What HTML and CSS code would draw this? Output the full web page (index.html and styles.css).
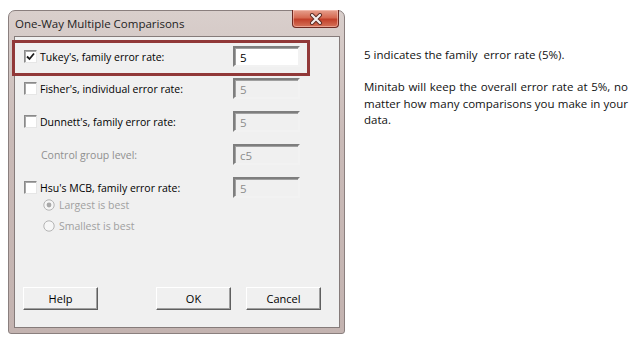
FILE: index.html
```html
<!DOCTYPE html>
<html lang="en">
<head>
  <meta charset="UTF-8" />
  <title>One-Way Multiple Comparisons</title>
  <link rel="stylesheet" href="styles.css">
</head>
<body>

  <div class="page">

    <!-- ===== DIALOG ===== -->
    <div class="dialog">
      <div class="titlebar">
        <span class="title">One-Way Multiple Comparisons</span>
        <button class="close" aria-label="Close">
          <svg width="14" height="12" viewBox="0 0 14 12">
            <path d="M3 2 L11 10 M11 2 L3 10" stroke="#5a2a22" stroke-width="4" stroke-linecap="round"/>
            <path d="M3 2 L11 10 M11 2 L3 10" stroke="#f4eeee" stroke-width="2.2" stroke-linecap="round"/>
          </svg>
        </button>
      </div>

      <div class="client">
        <div class="row highlight">
          <label class="opt"><span class="box"><svg width="9" height="9" viewBox="0 0 9 9"><path d="M1 4.5 L3.5 7 L8 1.5" fill="none" stroke="#1a1a1a" stroke-width="1.8"/></svg></span>Tukey's, family error rate:</label>
          <input class="field" type="text" value="5">
        </div>

        <div class="row first">
          <label class="opt"><span class="box"></span>Fisher's, individual error rate:</label>
          <input class="field" type="text" value="5" disabled>
        </div>

        <div class="row">
          <label class="opt"><span class="box"></span>Dunnett's, family error rate:</label>
          <input class="field" type="text" value="5" disabled>
        </div>

        <div class="row">
          <span class="sublabel">Control group level:</span>
          <input class="field" type="text" value="c5" disabled>
        </div>

        <div class="row">
          <label class="opt"><span class="box"></span>Hsu's MCB, family error rate:</label>
          <input class="field" type="text" value="5" disabled>
        </div>

        <div class="radios">
          <label class="radio">
            <svg width="12" height="12" viewBox="0 0 12 12"><circle cx="6" cy="6" r="5.2" fill="#f6f6f6" stroke="#b4b4b4"/><circle cx="6" cy="6" r="2.4" fill="#a9a9a9"/></svg>
            Largest is best
          </label>
          <label class="radio">
            <svg width="12" height="12" viewBox="0 0 12 12"><circle cx="6" cy="6" r="5.2" fill="#f6f6f6" stroke="#b4b4b4"/></svg>
            Smallest is best
          </label>
        </div>

        <div class="buttons">
          <button class="btn">Help</button>
          <span class="spacer"></span>
          <button class="btn">OK</button>
          <button class="btn">Cancel</button>
        </div>
      </div>
    </div>

    <!-- ===== NOTES ===== -->
    <div class="info">
      <p>5 indicates the family &nbsp;error rate (5%).</p>
      <p>Minitab will keep the overall error rate at 5%, no matter how many comparisons you make in your data.</p>
    </div>

  </div>

</body>
</html>
```

FILE: styles.css
```css
* {
  box-sizing: border-box;
  margin: 0;
  padding: 0;
}

body {
  background-color: #ffffff;
  font-family: "Open Sans", "Noto Sans", sans-serif;
}

.page {
  display: flex;
  align-items: flex-start;
  padding: 10px 0 0 8px;
}

/* ===== DIALOG FRAME ===== */
.dialog {
  width: 337px;
  height: 324px;
  display: flex;
  flex-direction: column;
  padding: 0 4px 5px 5px;
  background: linear-gradient(to bottom, #d9cfcc 0%, #c9bab7 40%, #c3b3b0 100%);
  border: 1px solid #8a7f7e;
  border-radius: 7px 7px 3px 3px;
}

.titlebar {
  height: 25px;
  display: flex;
  justify-content: space-between;
  align-items: flex-start;
}

.title {
  font-size: 11.5px;
  color: #1e1e1e;
  padding: 5px 0 0 1px;
}

.close {
  width: 47px;
  height: 18px;
  margin-top: -1px;
  margin-right: 1px;
  display: flex;
  align-items: center;
  justify-content: center;
  border: 1px solid #6e2a22;
  border-top: none;
  border-radius: 0 0 4px 4px;
  background: linear-gradient(to bottom, #e6a08e 0%, #d66a52 45%, #c1402a 55%, #d5735a 100%);
  box-shadow: inset 0 0 0 1px rgba(255, 210, 200, 0.5);
}

/* ===== CLIENT AREA ===== */
.client {
  flex: 1;
  display: flex;
  flex-direction: column;
  padding-top: 3px;
  background-color: #f0f0f0;
  border: 1px solid #857b7a;
  font-size: 10.5px;
  color: #000;
}

.row {
  height: 21px;
  margin-top: 12px;
  display: grid;
  grid-template-columns: 209px 67px;
  align-items: center;
  padding-left: 9px;
}

.row.first {
  margin-top: 2px;
}

.row.highlight {
  width: 298px;
  height: 36px;
  margin: 0 0 0 -3px;
  padding: 0 7px 3px 9px;
  border: 3px solid #913838;
}

.opt {
  display: flex;
  align-items: center;
  gap: 3px;
}

.box {
  width: 13px;
  height: 13px;
  display: flex;
  align-items: center;
  justify-content: center;
  background-color: #ffffff;
  border: 1px solid;
  border-color: #8a8a8a #e6e6e6 #e6e6e6 #8a8a8a;
  box-shadow: inset 1px 1px 0 #a8a8a8;
}

.sublabel {
  color: #8f8f8f;
  padding-left: 17px;
}

.field {
  width: 67px;
  height: 21px;
  padding: 1px 0 0 5px;
  font-family: inherit;
  font-size: 11.5px;
  color: #000;
  background-color: #ffffff;
  border: 2px solid;
  border-color: #7e7e7e #f2f2f2 #f2f2f2 #7e7e7e;
  box-shadow: inset 1px 1px 0 #a0a0a0;
  outline: none;
}

.field:disabled {
  color: #8c8c8c;
  -webkit-text-fill-color: #8c8c8c;
  background-color: #f0f0f0;
}

.radios {
  display: flex;
  flex-direction: column;
  margin-top: -4px;
  padding-left: 28px;
}

.radio {
  height: 21px;
  display: flex;
  align-items: center;
  gap: 4px;
  color: #a0a0a0;
}

/* ===== BUTTONS ===== */
.buttons {
  margin-top: auto;
  display: flex;
  gap: 15px;
  padding: 0 18px 17px 8px;
}

.spacer {
  flex: 1;
}

.btn {
  width: 75px;
  height: 23px;
  font-family: inherit;
  font-size: 11px;
  color: #000;
  background-color: #f0f0f0;
  border: 1px solid;
  border-color: #ffffff #5f5f5f #5f5f5f #ffffff;
  box-shadow: inset -1px -1px 0 #a0a0a0;
  cursor: pointer;
}

/* ===== NOTES ===== */
.info {
  width: 264px;
  margin: 37px 0 0 19px;
  font-size: 11.5px;
  line-height: 16.5px;
  text-align: justify;
  color: #111;
}

.info p + p {
  margin-top: 15.5px;
}
```
